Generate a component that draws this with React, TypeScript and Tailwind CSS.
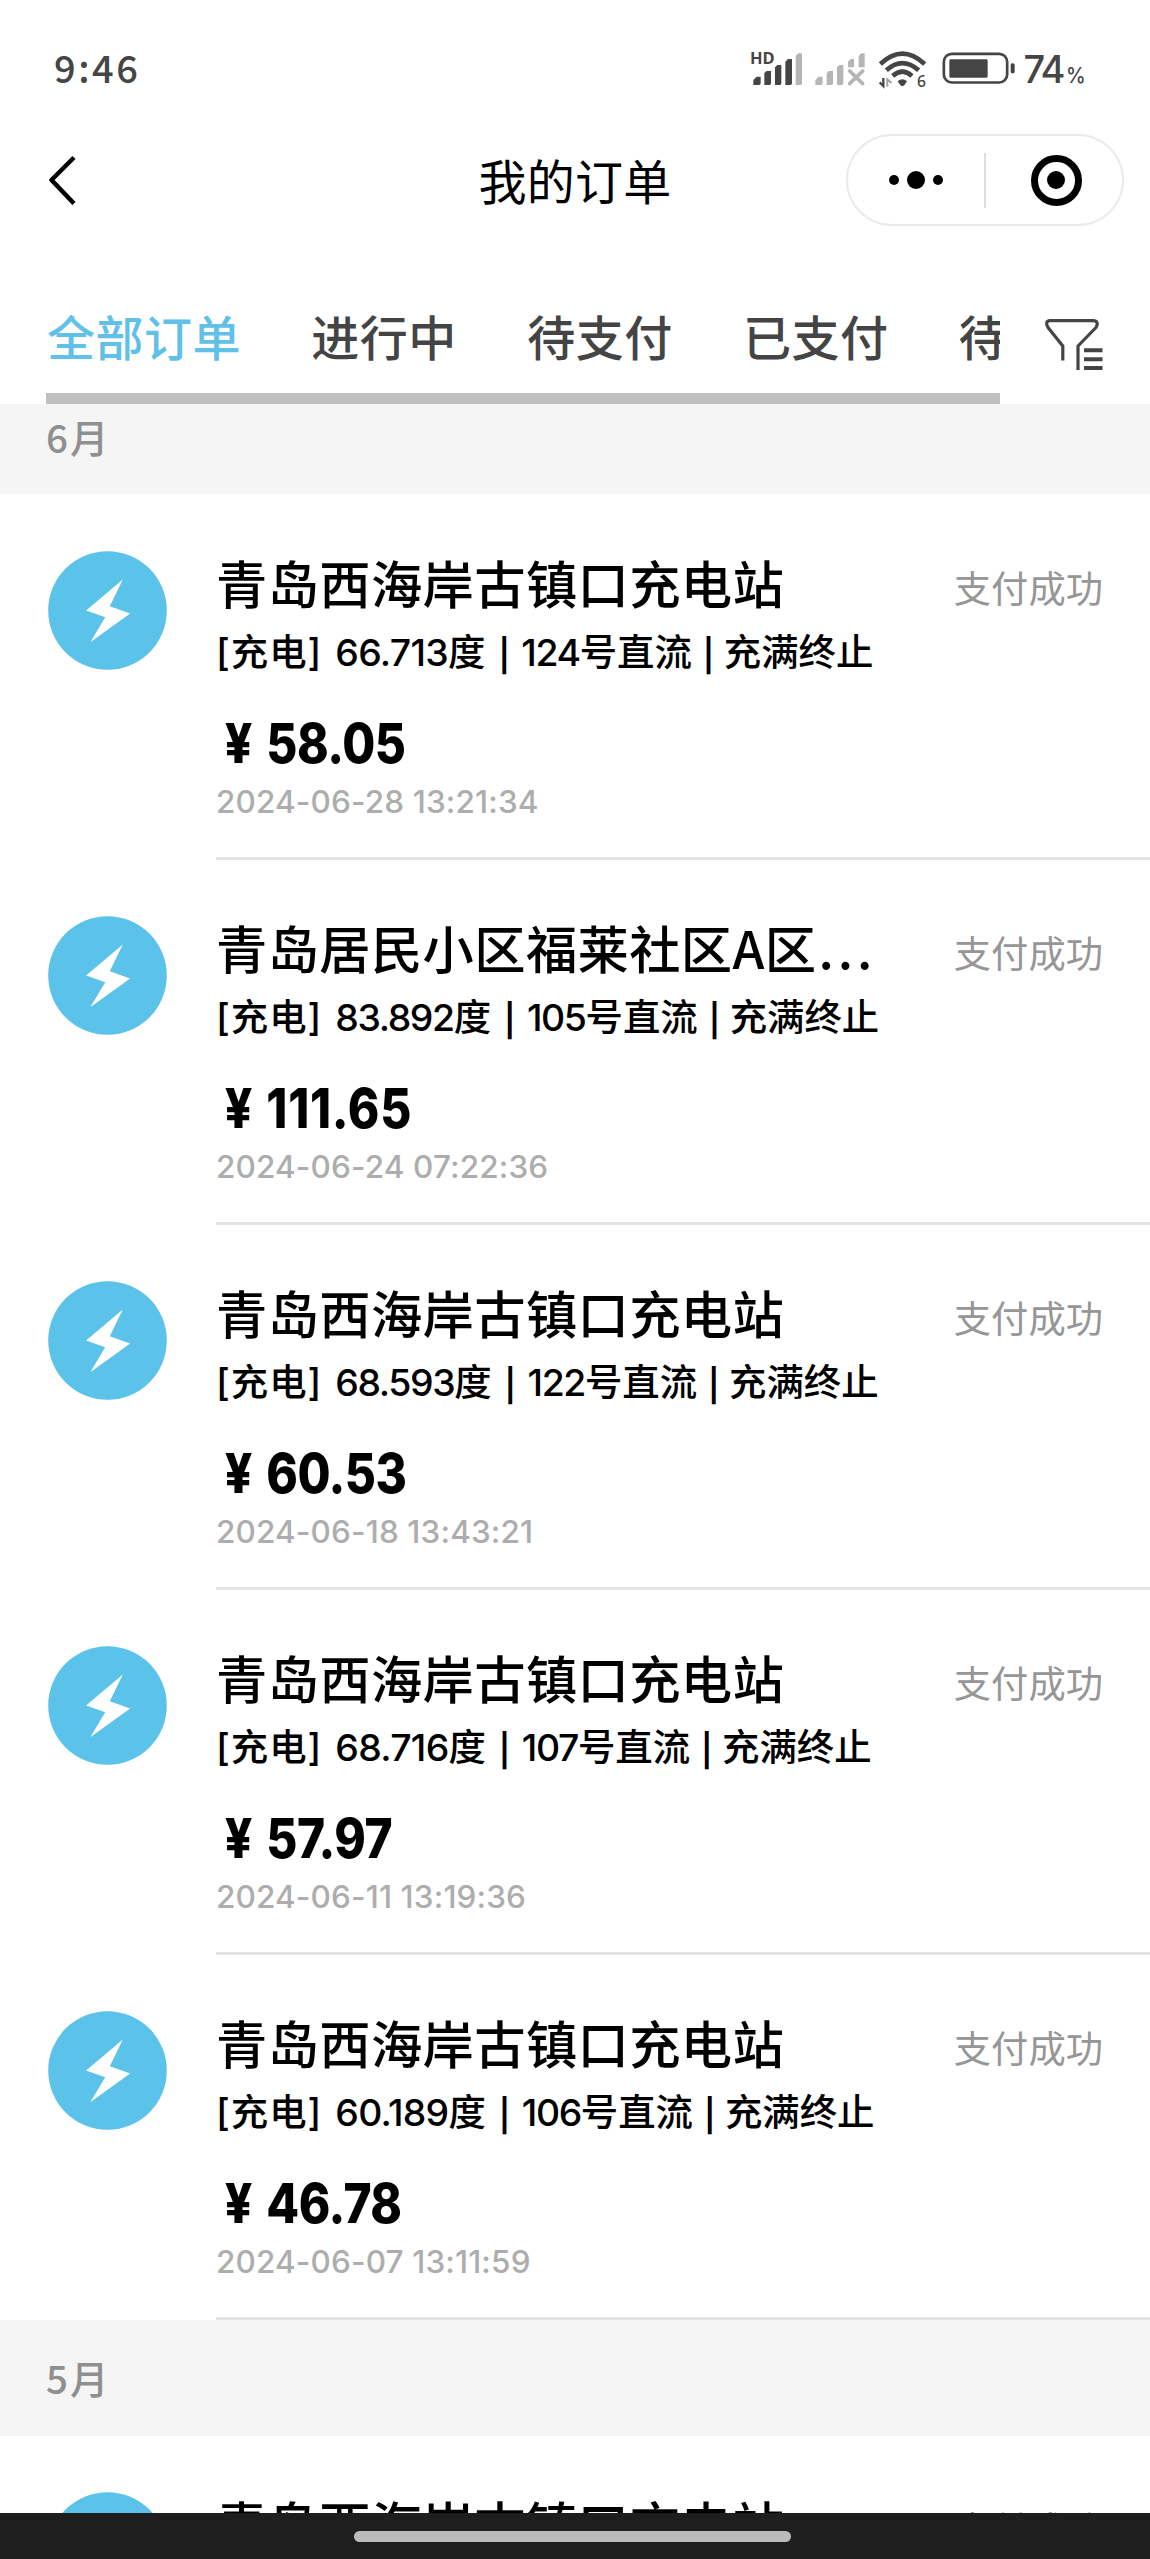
import React from "react";

type Order = {
  station: string;
  energy: string;
  gun: string;
  price: string;
  time: string;
};

const june: Order[] = [
  { station: "青岛西海岸古镇口充电站", energy: "66.713", gun: "124", price: "58.05", time: "2024-06-28 13:21:34" },
  { station: "青岛居民小区福莱社区A区...", energy: "83.892", gun: "105", price: "111.65", time: "2024-06-24 07:22:36" },
  { station: "青岛西海岸古镇口充电站", energy: "68.593", gun: "122", price: "60.53", time: "2024-06-18 13:43:21" },
  { station: "青岛西海岸古镇口充电站", energy: "68.716", gun: "107", price: "57.97", time: "2024-06-11 13:19:36" },
  { station: "青岛西海岸古镇口充电站", energy: "60.189", gun: "106", price: "46.78", time: "2024-06-07 13:11:59" },
];

const may: Order[] = [
  { station: "青岛西海岸古镇口充电站", energy: "62.305", gun: "124", price: "52.16", time: "2024-05-30 13:21:34" },
];

const tabs = ["全部订单", "进行中", "待支付", "已支付", "待评价"];

function StatusBar() {
  return (
    <div className="flex h-[134px] shrink-0 items-start justify-between pl-[54px] pr-[67px] pt-[50px] text-[#454545]">
      <div className="-mt-[3px] font-['Noto_Sans_CJK_SC',sans-serif] text-[38px] font-medium leading-[40px] tracking-[2.500px]">9:46</div>
      <div className="flex items-start">
        <svg className="h-[40px] w-[53px] overflow-visible" viewBox="150 90 159 120" fill="#454545">
          <text x="150" y="133" fontSize="48" fontWeight="700" fontFamily="Noto Sans" textLength="74" lengthAdjust="spacingAndGlyphs">HD</text>
          <path d="M160 195V180l10-10h12v20q0 5-5 5zM193 195v-36l7-6h13v37q0 5-5 5zM225 195v-53l7-7h12v55q0 5-5 5zM256 195v-70l8-8h12v73q0 5-5 5z" />
          <path d="M287 195v-87l8-8h11v90q0 5-5 5z" fill="#b5b5b5" />
        </svg>
        <svg className="ml-[11px] h-[40px] w-[52px]" viewBox="342 90 156 120" fill="#b5b5b5">
          <path d="M346 195v-15l10-10h12v20q0 5-5 5zM380 195v-36l7-6h12v37q0 5-5 5zM411 195v-53l7-7h12v55q0 5-5 5zM444 142v-17l8-8h10v25zM476 142v-34l8-8h10v42z" />
          <path d="M449 153l39 38M488 153l-39 38" stroke="#b5b5b5" strokeWidth="11" strokeLinecap="round" />
        </svg>
        <svg className="ml-[12px] h-[40px] w-[49px] overflow-visible" viewBox="533 90 147 120" fill="none" stroke="#454545" strokeWidth="14">
          <path d="M540 132Q606 70 673 132M558 151Q606 108 655 151M577 168Q606 142 635 168" />
          <path d="M592 184q14-12 28 0l-8 12q-6 5-12 0z" fill="#454545" stroke="none" />
          <path d="M549 174v24l-11-11" strokeWidth="7" />
          <path d="M561 200v-22l12 11" stroke="#a0a0a0" strokeWidth="6" />
          <text x="650" y="202" fill="#454545" stroke="none" fontSize="47" fontFamily="Noto Sans" fontWeight="500">6</text>
        </svg>
        <svg className="ml-[15px] h-[40px] w-[73px]" viewBox="724 90 219 120">
          <rect x="729.500" y="101.500" width="190" height="86" rx="24" fill="none" stroke="#454545" strokeWidth="8" />
          <rect x="746" y="118" width="115" height="55" rx="4" fill="#454545" />
          <rect x="930" y="130" width="12" height="30" rx="5" fill="#454545" />
        </svg>
        <div className="-mt-[1px] ml-[9px] flex items-baseline font-['Inter','Noto_Sans_CJK_SC',sans-serif] leading-[40px]">
          <span className="text-[38px] font-medium tracking-[-2.500px]">74</span>
          <span className="ml-[3px] inline-block w-[17px] origin-left scale-x-[0.900] text-[22px] font-medium">%</span>
        </div>
      </div>
    </div>
  );
}

function NavBar() {
  return (
    <div className="grid h-[92px] shrink-0 grid-cols-[304px_1fr_304px] items-center">
      <svg className="ml-[46px] h-[50px] w-[32px]" viewBox="0 0 32 50" fill="none" stroke="#000" strokeWidth="4.500" strokeLinejoin="round">
        <path d="M28 2.500L5.500 25 28 48.500" />
      </svg>
      <h1 className="-mt-[3px] text-center text-[48px] font-normal leading-none tracking-[0.300px]">我的订单</h1>
      <div className="flex h-[92px] w-[278px] items-center rounded-full border-2 border-[#ebebeb]">
        <div className="flex w-[136px] items-center justify-center gap-[8px] pr-[1px]">
          <span className="size-[10px] rounded-full bg-black" />
          <span className="size-[18px] rounded-full bg-black" />
          <span className="size-[10px] rounded-full bg-black" />
        </div>
        <span className="h-[55px] w-[2px] bg-[#dedede]" />
        <div className="flex flex-1 justify-center pl-[4px]">
          <span className="flex size-[51px] items-center justify-center rounded-full border-[7px] border-black">
            <span className="size-[18px] rounded-full bg-black" />
          </span>
        </div>
      </div>
    </div>
  );
}

function TabBar() {
  return (
    <div className="flex h-[178px] shrink-0 pl-[46px]">
      <div className="flex h-full w-[954px] flex-col justify-between overflow-hidden">
        <div className="mt-[73px] flex gap-[70.300px] whitespace-nowrap pl-[1px] text-[48px] font-medium leading-[72px] tracking-[0.500px] text-[#444]">
          {tabs.map((t, i) => (
            <span key={t} className={i === 0 ? "shrink-0 text-[#5fc1e8]" : "shrink-0"}>
              {t}
            </span>
          ))}
        </div>
        <div className="h-[11px] w-full bg-[#c0c0c0]" />
      </div>
      <svg className="ml-[43px] mt-[90px] h-[58px] w-[62px]" viewBox="0 0 62 58" fill="none" stroke="#444" strokeWidth="3.200">
        <path d="M19.800 44.500V30L5 11.500Q1.500 5 7 4.600H50Q56.500 5 53 11.500L35 30V54" strokeLinejoin="round" />
        <path d="M41 34.300H59.500M41 43.200H59.500M41 52H59.500" strokeWidth="4" />
      </svg>
    </div>
  );
}

function Station({ name }: { name: string }) {
  const [head, tail] = name.endsWith("...") ? [name.slice(0, -3), "..."] : [name, ""];
  return (
    <div className="mt-[52px] text-[51.300px] font-medium leading-[70px] tracking-[0.350px]">
      {head}
      {tail && <span className="ml-[2px] tracking-[4px]">{tail}</span>}
    </div>
  );
}

function Bar() {
  return <span className="mx-[3px] inline-block w-[10px] text-center align-[-1px] text-[32px] font-semibold leading-none">|</span>;
}

function OrderRow({ order }: { order: Order }) {
  return (
    <div className="flex h-[365px] shrink-0">
      <svg className="ml-[48px] mt-[56px] size-[119px] shrink-0" viewBox="0 0 119 119">
        <circle cx="59.500" cy="59.500" r="59.300" fill="#5bc2ea" />
        <path d="M74.800 28.500L38.100 59.500 57.200 66.200 42.300 91.200 82.100 62.500 61.800 55.200z" fill="#fff" />
      </svg>
      <div className="ml-[49px] flex flex-1 justify-between whitespace-nowrap border-b-[3px] border-[#e3e3e3] pr-[47px]">
        <div>
          <Station name={order.station} />
          <div className="mt-[4px] font-['Inter','Noto_Sans_CJK_SC',sans-serif] text-[37.400px] font-medium leading-[64px]">
            <span className="tracking-[1px] [word-spacing:2px]">[充电] </span>
            <span className={order.energy.includes("1") ? "tracking-[-0.700px]" : "tracking-[-1.400px]"}>{order.energy}</span>
            <span>度 <Bar /> </span>
            <span className="tracking-[-1.400px]">{order.gun}</span>
            <span>号直流 </span>
            <span className="-mx-[2px]"><Bar /></span>
            <span> 充满终止</span>
          </div>
          <div className="mt-[22px] flex origin-left scale-x-[0.870] items-baseline gap-[16px] pl-[10px] font-['Inter','Noto_Sans_CJK_SC',sans-serif] text-[55px] font-extrabold leading-[72px]">
            <span>¥</span>
            <span className={order.price.startsWith("11") ? "tracking-[0.800px]" : "tracking-[-0.600px]"}>{order.price}</span>
          </div>
          <div className="mt-[2px] font-['Inter','Noto_Sans_CJK_SC',sans-serif] text-[31.500px] font-medium leading-[42px] tracking-[0.130px] text-[#adadad]">{order.time}</div>
        </div>
        <div className="mt-[64px] text-[37.300px] leading-[56px] text-[#969696]">支付成功</div>
      </div>
    </div>
  );
}

export default function App() {
  return (
    <div className="flex h-[2559px] w-[1150px] flex-col overflow-hidden bg-white font-['Noto_Sans_CJK_SC',sans-serif] text-black">
      <StatusBar />
      <NavBar />
      <TabBar />
      <div className="flex min-h-0 flex-1 flex-col overflow-hidden">
        <div className="flex h-[90px] shrink-0 items-start bg-[#f5f5f5] pl-[46px] pt-[4px] text-[38.500px] font-medium leading-[56px] tracking-[2px] text-[#8f8f8f]">6月</div>
        <div className="flex flex-col pt-px">
          {june.map((o) => (
            <OrderRow key={o.time} order={o} />
          ))}
        </div>
        <div className="flex h-[116px] shrink-0 items-center bg-[#f5f5f5] pb-[3px] pl-[46px] text-[38.500px] font-medium leading-[56px] tracking-[2px] text-[#8f8f8f]">5月</div>
        {may.map((o) => (
          <OrderRow key={o.time} order={o} />
        ))}
      </div>
      <div className="flex h-[46px] shrink-0 justify-center bg-[#1e1e1e] pt-[18px]">
        <span className="mr-[5px] h-[11px] w-[437px] rounded-full bg-[#bbb]" />
      </div>
    </div>
  );
}
